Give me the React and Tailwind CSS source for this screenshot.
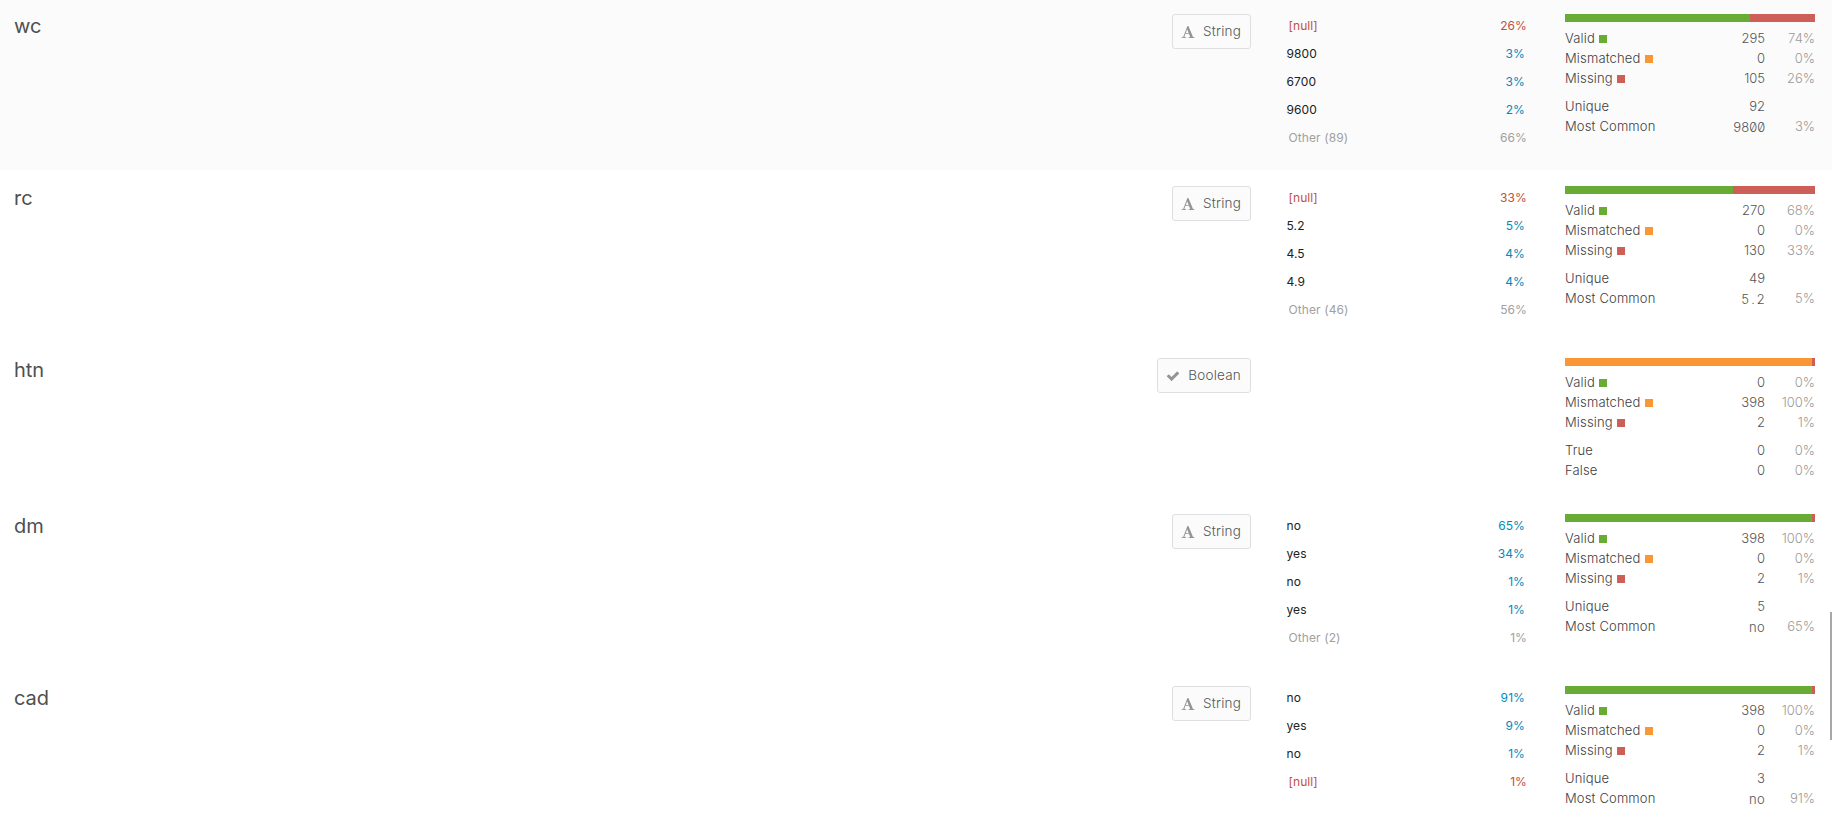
import React from "react";

const GREEN = "bg-[#69ac35]";
const ORANGE = "bg-[#f89733]";
const RED = "bg-[#cc6059]";

const columns = [
  {
    name: "wc", type: "String", height: "h-[170px] pt-[14px] bg-[#fbfbfb]",
    values: [["[null]", "26%", "null"], ["9800", "3%"], ["6700", "3%"], ["9600", "2%"], ["Other (89)", "66%", "other"]],
    bar: [[185, GREEN], [65, RED]],
    counts: [["295", "74%"], ["0", "0%"], ["105", "26%"]],
    extra: [["Unique", "92", ""], ["Most Common", "9800", "3%", "tracking-[-0.4px]"]],
  },
  {
    name: "rc", type: "String", height: "h-[172px] pt-4",
    values: [["[null]", "33%", "null"], ["5.2", "5%"], ["4.5", "4%"], ["4.9", "4%"], ["Other (46)", "56%", "other"]],
    bar: [[168, GREEN], [82, RED]],
    counts: [["270", "68%"], ["0", "0%"], ["130", "33%"]],
    extra: [["Unique", "49", ""], ["Most Common", "5.2", "5%", "tracking-[1.8px] -mr-[1.8px]"]],
  },
  {
    name: "htn", type: "Boolean", height: "h-[156px] pt-4",
    values: [],
    bar: [[247, ORANGE], [3, RED]],
    counts: [["0", "0%"], ["398", "100%"], ["2", "1%"]],
    extra: [["True", "0", "0%"], ["False", "0", "0%"]],
  },
  {
    name: "dm", type: "String", height: "h-[172px] pt-4",
    values: [["no", "65%"], ["yes", "34%"], ["no", "1%"], ["yes", "1%"], ["Other (2)", "1%", "other"]],
    bar: [[247, GREEN], [3, RED]],
    counts: [["398", "100%"], ["0", "0%"], ["2", "1%"]],
    extra: [["Unique", "5", ""], ["Most Common", "no", "65%", "tracking-[0.3px]"]],
  },
  {
    name: "cad", type: "String", height: "h-[153px] pt-4",
    values: [["no", "91%"], ["yes", "9%"], ["no", "1%"], ["[null]", "1%", "null"]],
    bar: [[247, GREEN], [3, RED]],
    counts: [["398", "100%"], ["0", "0%"], ["2", "1%"]],
    extra: [["Unique", "3", ""], ["Most Common", "no", "91%", "tracking-[0.3px]"]],
  },
];

const legend = [["Valid", GREEN], ["Mismatched", ORANGE], ["Missing", RED]];

function CheckIcon() {
  return (
    <svg className="h-[14px] w-[14px]" viewBox="0 0 1792 1792" fill="#949494">
      <path d="M1671 566q0 40-28 68l-724 724-136 136q-28 28-68 28t-68-28l-136-136-362-362q-28-28-28-68t28-68l136-136q28-28 68-28t68 28l294 295 656-657q28-28 68-28t68 28l136 136q28 28 28 68z" />
    </svg>
  );
}

function FontIcon() {
  return (
    <svg className="h-[14px] w-[14px]" viewBox="0 0 1792 1792" fill="#949494">
      <path d="M789 559l-170 450q33 0 136.500 2t160.500 2q19 0 57-2-87-253-184-452zm-725 1105l2-79q23-7 56-12.500t57-10.500 49.500-14.500 44.500-29 31-50.500l237-616 280-724h128q8 14 11 21l205 480q33 78 106 257.500t114 274.500q15 34 58 144.500t72 168.500q20 45 35 57 19 15 88 29.500t84 20.500q6 38 6 57 0 5-.5 13.500t-.5 12.500q-63 0-190-8t-191-8q-76 0-215 7t-178 8q0-43 4-78l131-28q1 0 12.500-2.500t15.500-3.500 14.500-4.500 15-6.500 11-8 9-11 2.500-14q0-16-31-96.500t-72-177.500-42-100l-450-2q-26 58-76.500 195.500t-50.500 162.500q0 22 14 37.500t43.500 24.500 48.500 13.500 57 8.500 41 4q1 19 1 58 0 9-2 27-58 0-174.500-10t-174.500-10q-8 0-26.500 4t-21.500 4q-80 14-188 14z" />
    </svg>
  );
}

function TypeBadge({ type }) {
  return (
    <div className="flex h-[35px] items-center rounded-[3px] border border-[#dedfe0] bg-[#fbfbfb] pr-[9px] pl-2 text-[13.500px] font-light tracking-[0.2px] text-[#555]">
      {type === "Boolean" ? <CheckIcon /> : <FontIcon />}
      <span className="ml-2">{type}</span>
    </div>
  );
}

function ValueRow({ label, percent, kind }) {
  const tone =
    kind === "null" ? "pl-0.5 text-[#c0503f]" : kind === "other" ? "pl-0.5 text-[#a0a0a0]" : "pr-0.5 text-[#202124]";
  return (
    <div className={`flex h-7 items-start justify-between text-xs leading-6 tracking-[0.1px] ${tone}`}>
      <span>{label}</span>
      <span className={kind ? "" : "text-[#008abc]"}>{percent}</span>
    </div>
  );
}

function StatRow({ label, swatch, count, percent, mono }) {
  return (
    <div className="flex h-5 items-center text-[13px] leading-5 font-light text-[#3c4043]">
      <span className="tracking-[0.15px]">{label}</span>
      {swatch && <span className={`mt-px ml-1 h-2 w-2 ${swatch}`} />}
      <span className="ml-auto text-[#555]">
        <span className={mono ? `inline-block pt-0.5 [font-feature-settings:'tnum','zero'] ${mono}` : ""}>{count}</span>
      </span>
      <span className="w-[50px] text-right text-[#9a9a9a]">{percent}</span>
    </div>
  );
}

function Column({ col }) {
  return (
    <section className={`flex w-full pl-[14px] ${col.height}`}>
      <h2 className="flex-1 text-[20px] leading-6 font-normal text-[#4f4f4f]">{col.name}</h2>
      <div className="flex items-start">
        <TypeBadge type={col.type} />
      </div>
      <div className="ml-[35.500px] w-[240.500px]">
        {col.values.map(([label, percent, kind], i) => (
          <ValueRow key={i} label={label} percent={percent} kind={kind} />
        ))}
      </div>
      <div className="mr-[17px] ml-[38px] w-[250px]">
        <div className="mb-[6px] flex h-2">
          {col.bar.map(([width, color], i) => (
            <div key={i} className={color} style={{ width }} />
          ))}
        </div>
        {legend.map(([label, swatch], i) => (
          <StatRow key={label} label={label} swatch={swatch} count={col.counts[i][0]} percent={col.counts[i][1]} />
        ))}
        <div className="h-2" />
        {col.extra.map(([label, count, percent, mono]) => (
          <StatRow key={label} label={label} count={count} percent={percent} mono={mono} />
        ))}
      </div>
    </section>
  );
}

export default function App() {
  return (
    <main className="relative h-[823px] w-full overflow-hidden bg-white font-['Inter',sans-serif]">
      {columns.map((col) => (
        <Column key={col.name} col={col} />
      ))}
      <div className="absolute top-[612px] right-0 h-32 w-0.5 bg-[#a8a8a8]" />
    </main>
  );
}
